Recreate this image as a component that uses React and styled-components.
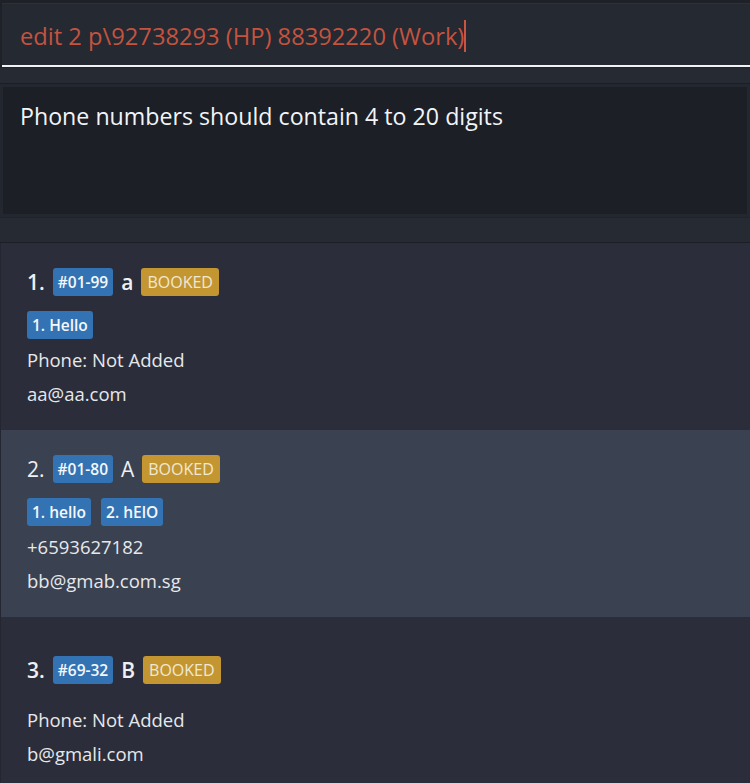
import styled, { createGlobalStyle } from 'styled-components';

const GlobalStyle = createGlobalStyle`
  html, body {
    margin: 0;
    padding: 0;
    background: #21252d;
  }
  body {
    font-family: "Open Sans", "Noto Sans", sans-serif;
    overflow: hidden;
  }
`;

const people = [
  { id: 1, unit: '#01-99', name: 'a', tags: ['1. Hello'], phone: 'Phone: Not Added', email: 'aa@aa.com' },
  { id: 2, unit: '#01-80', name: 'A', tags: ['1. hello', '2. hElO'], phone: '+6593627182', email: 'bb@gmab.com.sg' },
  { id: 3, unit: '#69-32', name: 'B', tags: [], phone: 'Phone: Not Added', email: 'b@gmali.com' },
];

const Window = styled.div`
  width: 750px;
  height: 783px;
  display: flex;
  flex-direction: column;
  background: #21252d;
  overflow: hidden;
`;

const CommandPane = styled.div`
  padding: 3px 0 0 2px;
  background: #1e2128;
`;

const CommandBox = styled.div`
  height: 61px;
  background: #252932;
  border-top: 1px solid #2c303a;
  border-bottom: 2px solid #f2f2f2;
  display: flex;
  align-items: center;
  padding-left: 18px;
`;

const CommandText = styled.span`
  font-size: 23.7px;
  color: #c4533f;
  border-right: 2px solid #c95540;
  line-height: 32px;
  margin-top: 2px;
`;

const Separator = styled.div`
  height: ${(p) => p.h}px;
  flex-shrink: 0;
  background: #262a33;
  border-top: 1px solid #20232a;
  border-bottom: 1px solid #1b1e25;
  box-sizing: border-box;
`;

const ResultBox = styled.div`
  height: 133px;
  flex-shrink: 0;
  box-sizing: border-box;
  background: #1c1f26;
  border: 3px solid #23272f;
  padding: 13px 17px;
  font-size: 23.2px;
  line-height: 33px;
  color: #f2f4f8;
`;

const List = styled.div`
  flex: 1;
  display: flex;
  flex-direction: column;
`;

const Cell = styled.div`
  height: 187px;
  flex-shrink: 0;
  box-sizing: border-box;
  background: ${(p) => (p.alt ? '#3a4150' : '#2b2e3a')};
  border-left: 1px solid #242731;
  display: flex;
  flex-direction: column;
  justify-content: center;
  padding-left: 26px;
  color: #eef0f4;
`;

const TitleRow = styled.div`
  display: flex;
  align-items: center;
  gap: 8px;
  height: 28px;
`;

const Heading = styled.span`
  font-size: 21px;
  font-weight: ${(p) => (p.light ? 400 : 600)};
`;

const Badge = styled.span`
  display: inline-flex;
  align-items: center;
  height: 28px;
  padding: 0 ${(p) => (p.gold ? 6 : 5)}px;
  border-radius: 3px;
  font-size: ${(p) => (p.gold ? 16 : 15.5)}px;
  background: ${(p) => (p.gold ? '#c39632' : '#3373b3')};
  color: ${(p) => (p.gold ? '#f1e8d2' : '#f5f7fa')};
  font-weight: ${(p) => (p.gold ? 400 : 600)};
`;

const TagRow = styled.div`
  display: flex;
  gap: 10px;
  margin: 15px 0 9px;
`;

const Detail = styled.div`
  font-size: 18.5px;
  line-height: 24px;
  color: #e6e8ec;
`;

const Details = styled.div`
  display: flex;
  flex-direction: column;
  gap: 10px;
`;

export default function App() {
  return (
    <Window>
      <GlobalStyle />
      <CommandPane>
        <CommandBox>
          <CommandText>edit 2 p\92738293 (HP) 88392220 (Work)</CommandText>
        </CommandBox>
      </CommandPane>
      <Separator h={17} />
      <ResultBox>Phone numbers should contain 4 to 20 digits</ResultBox>
      <Separator h={26} />
      <List>
        {people.map((p, i) => (
          <Cell key={p.id} alt={i % 2 === 1}>
            <TitleRow>
              <Heading light={i % 2 === 1}>{p.id}.</Heading>
              <Badge>{p.unit}</Badge>
              <Heading light={i % 2 === 1}>{p.name}</Heading>
              <Badge gold>BOOKED</Badge>
            </TitleRow>
            <TagRow>
              {p.tags.map((t) => (
                <Badge key={t}>{t}</Badge>
              ))}
            </TagRow>
            <Details>
              <Detail>{p.phone}</Detail>
              <Detail>{p.email}</Detail>
            </Details>
          </Cell>
        ))}
      </List>
    </Window>
  );
}
